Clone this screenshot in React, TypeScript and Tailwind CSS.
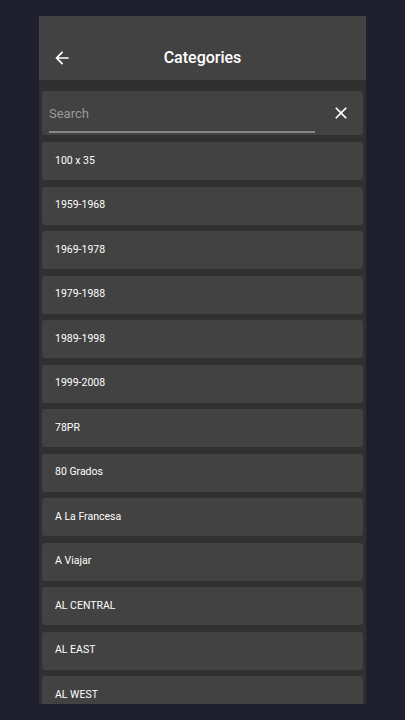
import React from "react";

const items = [
  "100 x 35",
  "1959-1968",
  "1969-1978",
  "1979-1988",
  "1989-1998",
  "1999-2008",
  "78PR",
  "80 Grados",
  "A La Francesa",
  "A Viajar",
  "AL CENTRAL",
  "AL EAST",
  "AL WEST",
];

export default function App() {
  return (
    <div
      className="w-[405px] h-[720px] bg-[#1e202e] pt-[16px] pl-[39px]"
      style={{ fontFamily: "Roboto, 'Noto Sans', sans-serif" }}
    >
      <div className="w-[327px] h-[688px] bg-[#303030] overflow-hidden flex flex-col">
        <div className="h-[64px] shrink-0 bg-[#424242] pt-[20px] relative flex items-center justify-center">
          <svg
            className="absolute left-[13px] top-[32px]"
            width="20"
            height="20"
            viewBox="0 0 24 24"
            fill="#ffffff"
          >
            <path d="M20 11H7.830l5.59-5.59L12 4l-8 8 8 8 1.41-1.41L7.83 13H20v-2z" />
          </svg>
          <span className="text-white text-[16px] font-medium leading-none">Categories</span>
        </div>
        <div className="flex flex-col px-[3px] pt-[11px] gap-[6.5px]">
          <div className="h-[44px] bg-[#424242] rounded-[3px] flex items-center pl-[7px] pr-[12px] mb-[0.5px]">
            <div className="flex-1 h-full flex flex-col justify-end">
              <div className="flex-1 flex items-center pt-[5px]">
                <span className="text-[#9a9a9a] text-[13px] leading-none">Search</span>
              </div>
              <div className="h-[2px] bg-[#858585] mb-[2px] mr-[8px]" />
            </div>
            <svg width="20" height="20" viewBox="0 0 24 24" fill="#ffffff" className="ml-[8px]">
              <path d="M19 6.41 17.59 5 12 10.59 6.41 5 5 6.41 10.59 12 5 17.59 6.41 19 12 13.41 17.59 19 19 17.59 13.41 12z" />
            </svg>
          </div>
          {items.map((t) => (
            <div
              key={t}
              className="h-[38px] shrink-0 bg-[#424242] rounded-[3px] flex items-center pl-[13px]"
            >
              <span className="text-white text-[10.5px] leading-none">{t}</span>
            </div>
          ))}
        </div>
      </div>
    </div>
  );
}
